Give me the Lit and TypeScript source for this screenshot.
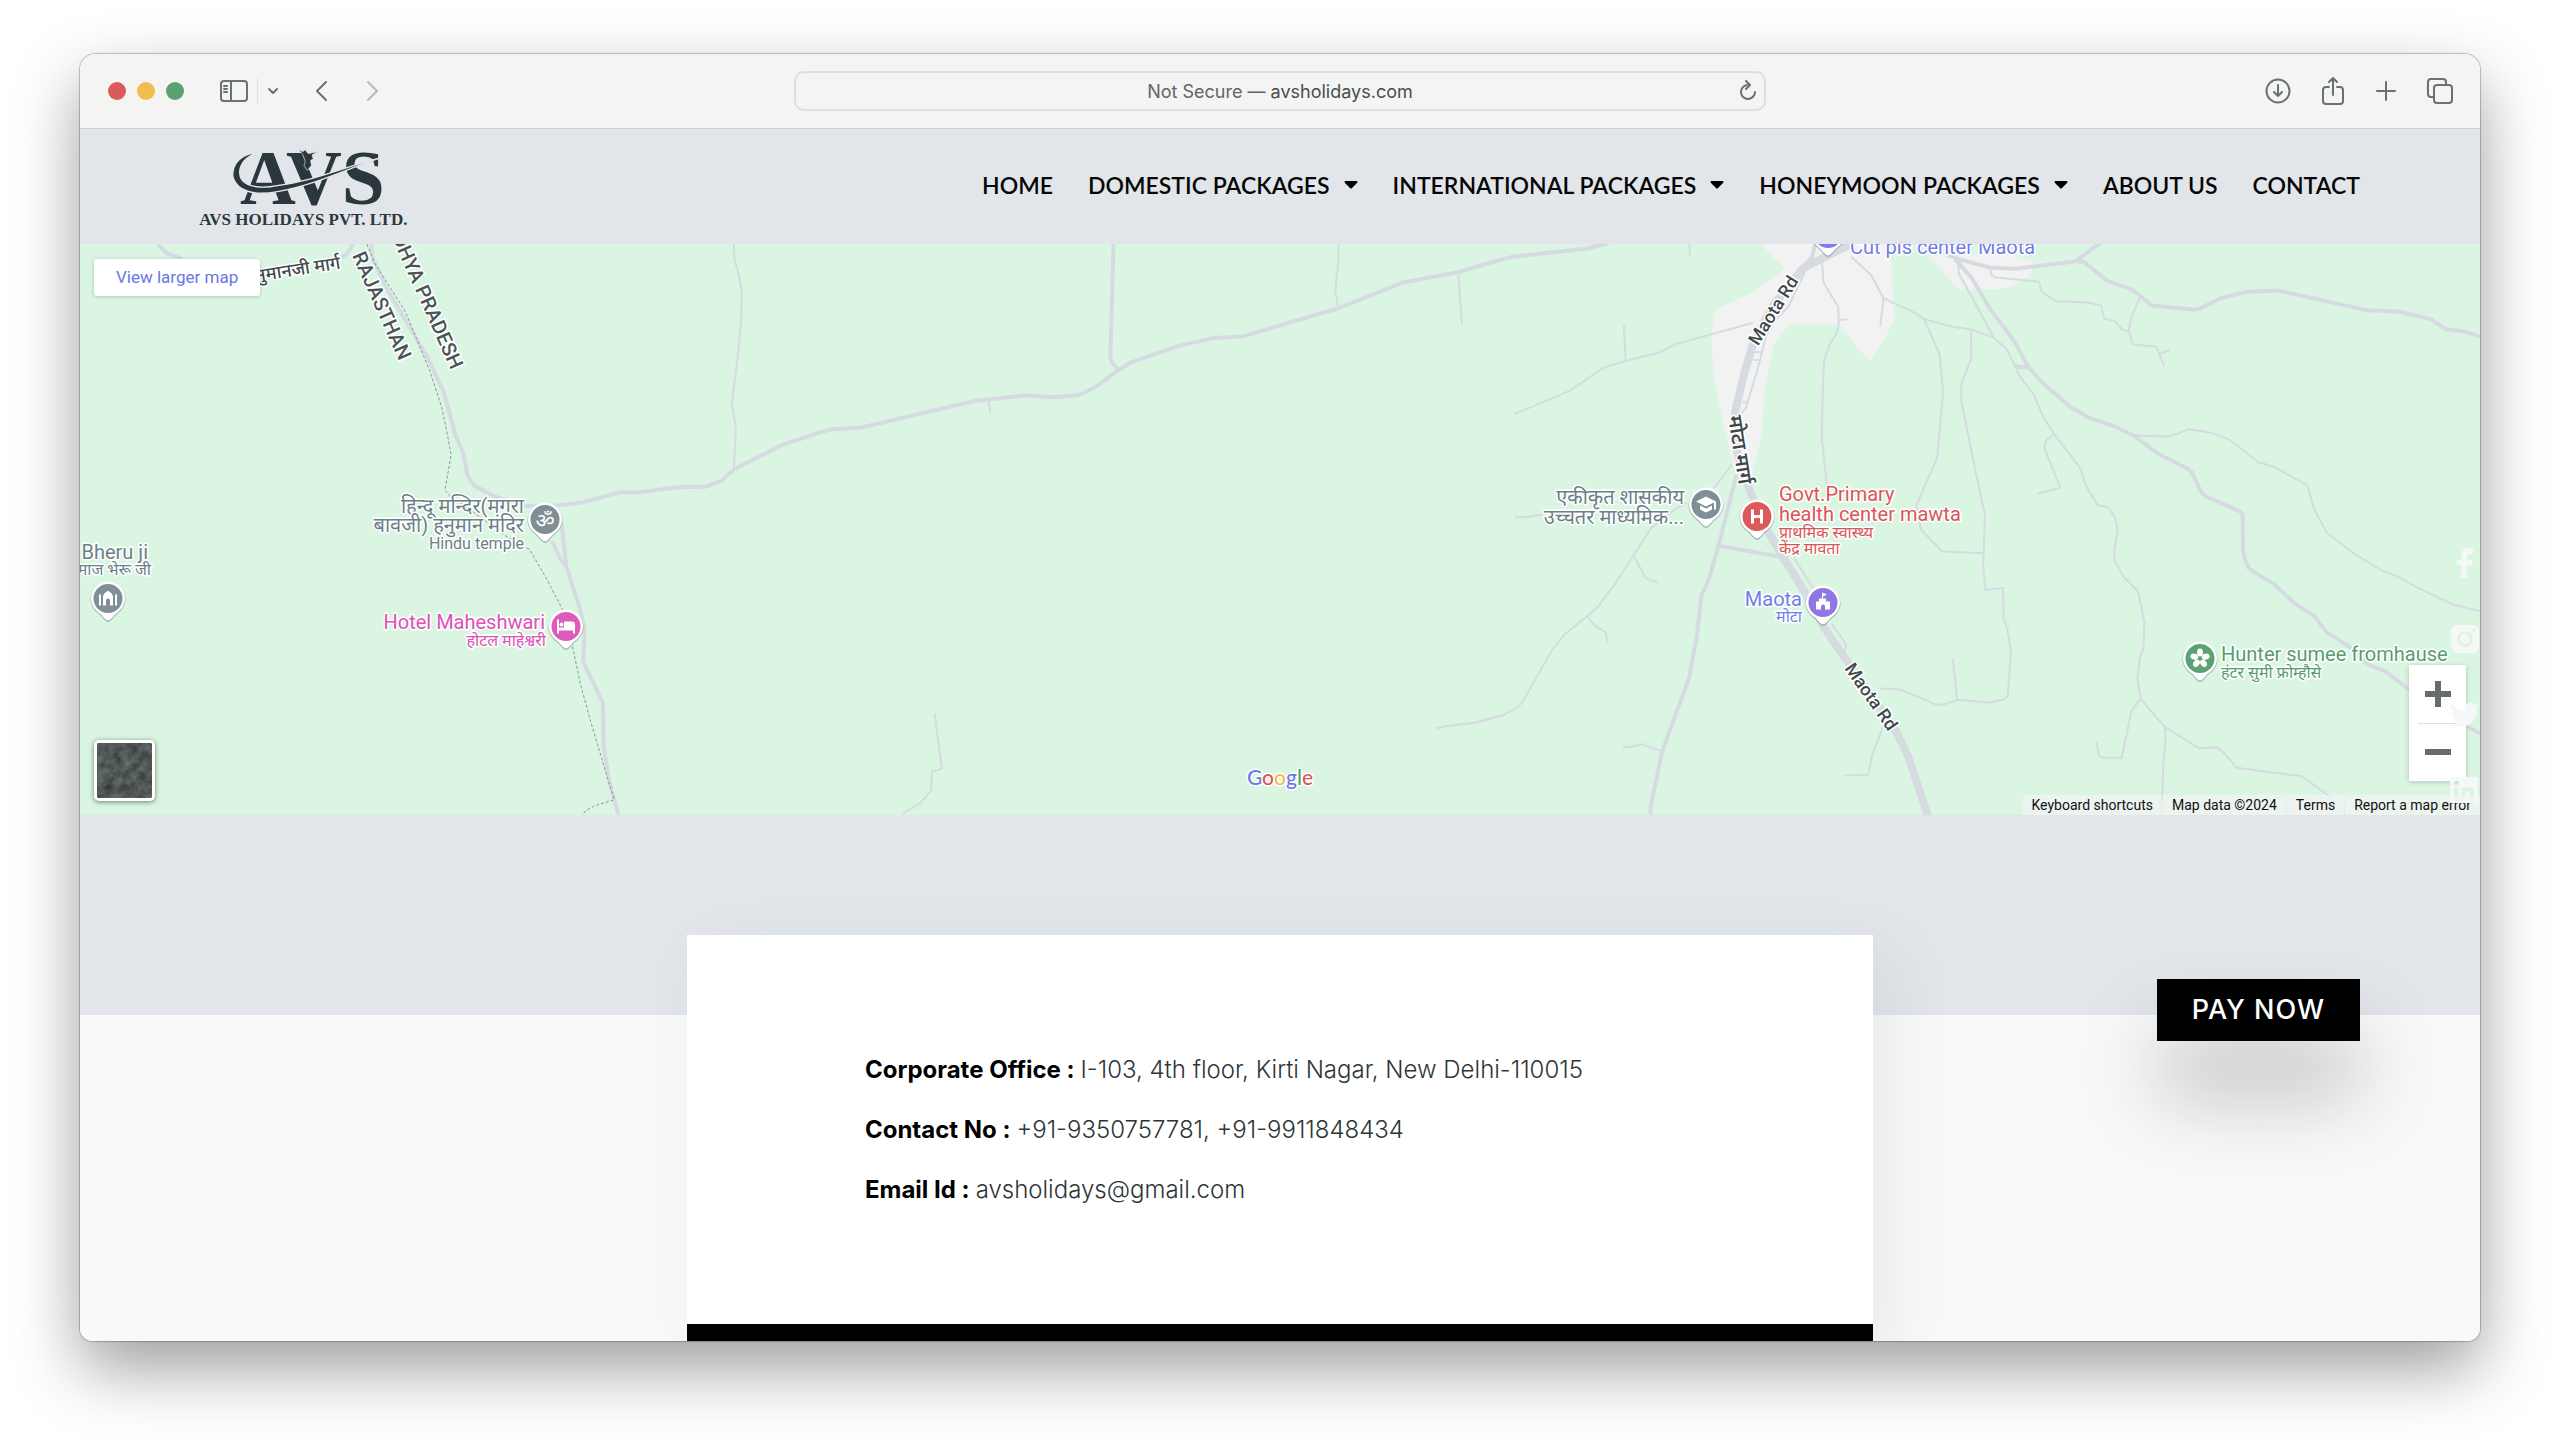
import { LitElement, html, svg, css } from "lit";
import { customElement } from "lit/decorators.js";

/* One tile of the map: its origin and scale on the canvas, and the lines drawn in its own units. */
interface Tile {
  at: string;
  land?: string[];
  trunk?: string[];
  major?: string[];
  minor?: string[];
  border?: string[];
}

const TILES: Tile[] = [
  {
    at: "translate(60 240) scale(0.4082 0.3699)",
    major: [
      "M240 10L262 35L300 50",
      "M718 10L704 36L690 46",
      "M762 10L767 50L800 130L900 315L940 410L970 530L988 575L998 635L1014 662L1065 692L1140 718L1225 716L1280 708L1375 680L1410 682L1510 668L1568 665",
      "M1205 812L1225 860L1240 880",
      "M1228 760L1240 880L1275 1000L1285 1050L1282 1140L1330 1250L1332 1370L1345 1460L1370 1560",
    ],
    border: [
      "M752 10L770 60L845 190L905 350L935 450L950 530L958 580L943 675L955 690L1020 740L1100 805L1150 835L1190 910L1232 1000L1258 1110L1275 1200L1300 1300L1335 1430L1358 1512L1310 1528L1290 1540L1275 1558",
    ],
  },
  {
    at: "translate(680 230) scale(0.523 0.3763)",
    major: [
      "M0 682L48 681L80 664L103 635L195 570L265 538L290 528L345 524L560 454L660 438L712 443L762 438L792 418L840 370L860 352L955 306L1020 286L1075 282L1260 206L1380 139L1488 111L1568 78",
      "M829 30L823 330L825 350L838 370",
    ],
    minor: [
      "M103 30L104 75L112 115L118 160L117 240L110 340L99 460L107 525L103 635",
      "M590 450L593 485",
      "M1259 30L1259 75L1253 160L1259 206",
      "M1488 111L1495 250",
      "M487 1283L494 1360L501 1430L482 1438L480 1490L460 1520L428 1548L426 1558",
      "M1447 1323L1470 1316L1520 1308L1568 1289",
    ],
  },
  {
    at: "translate(1480 230) scale(0.3571 0.3763)",
    land: [
      "M780 30L855 102L765 165L658 210L650 260L652 380L685 530L715 640L760 650L790 540L795 430L822 305L865 250L1005 250L1085 343L1098 343L1160 240L1148 30Z",
      "M1255 70L1345 158L1450 156L1490 148L1532 125L1548 104L1548 80L1480 62Z",
    ],
    trunk: [
      "M1035 37L905 100L875 135L820 200L765 300L740 380L715 480L720 590L755 690L800 790L850 870L915 970L960 1050L1010 1120L1165 1330L1200 1400L1230 1486L1256 1560",
    ],
    major: [
      "M940 30L930 70L895 110",
      "M0 93L90 70L300 48L360 34",
      "M718 650L670 830L640 930L620 970L607 1080L585 1190L510 1385L478 1530L477 1560",
      "M670 838L845 868",
    ],
    minor: [
      "M98 487L250 427L345 365L408 346L500 325L548 302L765 245",
      "M403 252L408 346",
      "M587 30L587 66",
      "M910 110L865 200L820 245L800 285L780 360L745 470L720 500",
      "M765 323H790",
      "M765 344H786",
      "M735 457H748",
      "M958 85L962 138L1003 203L1005 250L998 275L978 305L964 345L960 420L957 550L972 680",
      "M1007 238L1032 236",
      "M1040 70L1095 118L1130 180L1210 215L1243 235L1310 253L1344 259",
      "M1130 180L1121 255",
      "M1243 235L1287 330L1297 430L1280 605L1222 730L1235 795L1295 853L1410 858",
      "M1375 264L1376 340L1348 408L1348 455L1390 650L1414 755L1409 890L1415 955L1465 950L1466 1030L1476 1055L1487 1120L1478 1235L1468 1246L1425 1255L1338 1247L1298 1260L1272 1258L1178 1220L1120 1217",
      "M1324 1137L1336 1247",
      "M1128 1320L1098 1395L1088 1446L1020 1448",
      "M705 622L655 685",
      "M580 722L540 745L480 790L430 863L385 930L330 1000L300 1025L235 1075L200 1118L118 1255L100 1270L60 1290L0 1305",
      "M430 863L463 923L500 936",
      "M300 1025L320 1048L352 1068L357 1097",
      "M400 1370L418 1373L455 1365L505 1383",
      "M98 762L130 762L175 754",
      "M880 870L935 955",
      "M985 1045L1025 1100L1022 1117L1010 1115",
    ],
  },
  {
    at: "translate(1960 240) scale(0.3333)",
    major: [
      "M-40 42L0 57L90 81L165 85L350 62L373 65L443 122L512 145L540 165L575 195L700 207L720 205L785 172L860 154L955 150L1220 209L1315 213L1410 235L1460 267L1510 272L1564 290",
      "M350 60L420 8",
      "M-15 55L35 112L90 205L165 305L203 377L250 430L330 498L390 533L465 558L520 585L600 643L680 683L695 695L722 752L735 767L848 816",
      "M163 374L180 380L200 380",
    ],
    minor: [
      "M90 81L93 100L102 110L237 124L245 155L288 182L385 186L423 195L433 235L462 240L487 267L506 273L520 313L588 318L598 340L612 378",
      "M598 340L628 330",
      "M540 170L514 232L506 273",
      "M-6 62L-3 100L102 292",
      "M0 262L40 268L102 292L141 328L182 412L220 460L250 530L283 582L362 685L378 735L410 790L418 795L446 801L467 835L473 868L470 868",
      "M283 582L258 600L253 622L301 742L232 760",
      "M520 585L620 588L650 581L687 566L755 577L810 598L893 664L945 681L1042 735L1062 805L1100 876",
    ],
  },
  {
    at: "translate(1980 480) scale(0.3333)",
    major: [
      "M788 96L789 210L796 240L808 265L885 313L945 370L1005 408L1040 455L1110 500L1160 550L1215 572L1285 625L1460 738L1502 759",
    ],
    minor: [
      "M413 148L403 215L404 240L430 288L475 334L493 425L491 500L480 530L472 595L482 655L555 740L657 803L710 800L735 820L770 862L965 887L1045 945L1095 1004",
      "M482 655L455 690L425 832L365 832L355 820L350 785",
      "M555 740L557 775L550 850L548 920L540 1006",
      "M1040 156L1120 218L1205 270L1250 287L1315 323L1420 372L1502 393",
    ],
  },
];

interface Label {
  x: number;
  y: number;
  text: string;
  kind: string;
  turn?: number;
}

const LABELS: Label[] = [
  { x: 352, y: 255, text: "RAJASTHAN", kind: "region", turn: 66 },
  { x: 451, y: 370, text: "MADHYA PRADESH", kind: "region end", turn: 66 },
  { x: 341, y: 268, text: "हनुमानजी मार्ग", kind: "road end", turn: -9 },
  { x: 524, y: 512, text: "हिन्दू मन्दिर(मगरा", kind: "place grey end" },
  { x: 524, y: 531, text: "बावजी) हनुमान मंदिर", kind: "place grey end" },
  { x: 524, y: 548, text: "Hindu temple", kind: "sub grey end" },
  { x: 148, y: 558, text: "Bheru ji", kind: "place grey end" },
  { x: 151, y: 574, text: "समाज भेरू जी", kind: "sub grey end" },
  { x: 545, y: 628, text: "Hotel Maheshwari", kind: "place pink end" },
  { x: 546, y: 645, text: "होटल माहेश्वरी", kind: "sub pink end" },
  { x: 1850, y: 253, text: "Cut pls center Maota", kind: "place blue" },
  { x: 1758, y: 346, text: "Maota Rd", kind: "road", turn: -58 },
  { x: 1728, y: 416, text: "मोटा मार्ग", kind: "road large", turn: 81 },
  { x: 1844, y: 668, text: "Maota Rd", kind: "road", turn: 55 },
  { x: 1684, y: 503, text: "एकीकृत शासकीय", kind: "place grey end" },
  { x: 1684, y: 523, text: "उच्चतर माध्यमिक...", kind: "place grey end" },
  { x: 1779, y: 500, text: "Govt.Primary", kind: "place red" },
  { x: 1779, y: 520, text: "health center mawta", kind: "place red" },
  { x: 1779, y: 537, text: "प्राथमिक स्वास्थ्य", kind: "sub red" },
  { x: 1779, y: 553, text: "केंद्र मावता", kind: "sub red" },
  { x: 1802, y: 605, text: "Maota", kind: "place blue end" },
  { x: 1802, y: 621, text: "मोटा", kind: "sub blue end" },
  { x: 2221, y: 660, text: "Hunter sumee fromhause", kind: "place green" },
  { x: 2221, y: 677, text: "हंटर सुमी फ्रोम्हौसे", kind: "sub green" },
];

const GLYPHS = {
  temple: svg`<text class="om" x="0" y="8" text-anchor="middle">ॐ</text>`,
  shrine: svg`<path fill="#fff" d="M-9 7v-10l1-2 1 2v10zM7 7v-10l1-2 1 2v10zM-5 7v-9c1-4 3-4 5-6 2 2 4 2 5 6v9h-3v-5a2 2 0 0 0-4 0v5z"/>`,
  bed: svg`<path fill="#fff" d="M-9-7h2v8h5v-6h8a3 3 0 0 1 3 3v9h-2v-3h-14v3h-2z"/><circle cx="-4.500" cy="-2" r="2" fill="#fff"/>`,
  school: svg`<path fill="#fff" d="M-10-3l10-5 10 5v8h-2v-7l-8 4zM-6 1l6 3 6-3v4l-6 3-6-3z"/>`,
  hospital: svg`<path fill="none" stroke="#fff" stroke-width="3" d="M-4.500-7v14M4.500-7v14M-4.500 0h9"/>`,
  civic: svg`<path fill="#fff" d="M-1-10l5 2-4 2v2h3v3h4v8h-5v-3a2 2 0 0 0-4 0v3h-5v-8h3v-3h3z"/>`,
  flower: svg`${[0, 72, 144, 216, 288].map(
    (a) => svg`<ellipse cx="0" cy="-6" rx="3" ry="4" fill="#fff" transform="rotate(${a})"/>`
  )}`,
  none: svg``,
};

const PINS: { x: number; y: number; fill: string; glyph: keyof typeof GLYPHS }[] = [
  { x: 545, y: 519, fill: "#7f8f96", glyph: "temple" },
  { x: 108, y: 598, fill: "#7f8f96", glyph: "shrine" },
  { x: 566, y: 626, fill: "#de5bbb", glyph: "bed" },
  { x: 1828, y: 233, fill: "#7b7fea", glyph: "none" },
  { x: 1706, y: 504, fill: "#7f8f96", glyph: "school" },
  { x: 1757, y: 516, fill: "#dd5a5a", glyph: "hospital" },
  { x: 1823, y: 602, fill: "#8f78e4", glyph: "civic" },
  { x: 2200, y: 658, fill: "#5aa274", glyph: "flower" },
];

@customElement("area-map")
export class AreaMap extends LitElement {
  static styles = css`
    :host {
      display: block;
      position: relative;
      height: 572px;
      overflow: hidden;
      background: #daf6e3;
      font-family: Roboto, "Noto Sans Devanagari", "Noto Sans", sans-serif;
    }
    .canvas {
      display: block;
      width: 100%;
      height: 100%;
    }
    .land {
      fill: #f3f2f3;
    }
    .line {
      fill: none;
      stroke: #d5dbe1;
      stroke-linejoin: round;
      vector-effect: non-scaling-stroke;
    }
    .trunk {
      stroke-width: 8px;
    }
    .major {
      stroke-width: 4px;
    }
    .minor {
      stroke-width: 2px;
    }
    .border {
      stroke: #8d9499;
      stroke-width: 1px;
      stroke-dasharray: 3 2;
    }
    .label {
      paint-order: stroke;
      stroke: #fff;
      stroke-width: 3px;
      stroke-linejoin: round;
    }
    .place {
      font-size: 20px;
    }
    .sub {
      font-size: 16px;
    }
    .region {
      font-size: 20px;
      font-weight: 500;
      fill: #4b5356;
    }
    .road {
      font-size: 18px;
      font-weight: 500;
      fill: #3f484b;
    }
    .large {
      font-size: 20px;
      font-weight: 600;
    }
    .end {
      text-anchor: end;
    }
    .grey {
      fill: #6c7f88;
    }
    .pink {
      fill: #dd50b8;
    }
    .blue {
      fill: #727ce8;
    }
    .red {
      fill: #db5558;
    }
    .green {
      fill: #579c70;
    }
    .om {
      font-size: 21px;
      fill: #fff;
    }
    .wordmark {
      font: 500 21px Lato, sans-serif;
      text-anchor: middle;
    }
    .g-blue {
      fill: #6a78e8;
    }
    .g-red {
      fill: #dd5555;
    }
    .g-yellow {
      fill: #f1b94b;
    }
    .g-green {
      fill: #4fa06a;
    }
    .larger {
      position: absolute;
      left: 14px;
      top: 15px;
      padding: 0 22px;
      line-height: 37px;
      border-radius: 3px;
      background: #fff;
      box-shadow: 0 1px 4px rgba(0, 0, 0, 0.2);
      color: #6a76e8;
      font-size: 17px;
      text-decoration: none;
    }
    .satellite {
      position: absolute;
      left: 14px;
      bottom: 14px;
      width: 61px;
      height: 61px;
      padding: 0;
      border: 3px solid #fff;
      border-radius: 5px;
      overflow: hidden;
      background: #4c5452;
      box-shadow: 0 1px 5px rgba(0, 0, 0, 0.5);
    }
    .satellite svg {
      display: block;
    }
    .zoom {
      position: absolute;
      right: 14px;
      bottom: 34px;
      display: flex;
      flex-direction: column;
      background: #fff;
      box-shadow: 0 1px 5px rgba(0, 0, 0, 0.2);
    }
    .zoom button {
      display: grid;
      place-items: center;
      width: 57px;
      height: 58px;
      padding: 0;
      border: 0;
      background: none;
    }
    .zoom hr {
      width: 40px;
      height: 1px;
      margin: 0 auto -1px;
      border: 0;
      background: #dfe2e2;
    }
    .credits {
      position: absolute;
      right: 0;
      bottom: 0;
      display: flex;
      gap: 1px;
      font-size: 14px;
      line-height: 20px;
      color: #111;
    }
    .credits > * {
      margin: 0;
      padding: 0 9px;
      border: 0;
      background: rgba(243, 243, 243, 0.7);
      font: inherit;
      color: inherit;
      text-decoration: none;
    }
  `;

  private lines(kind: string, paths: string[] = []) {
    return paths.map((d) => svg`<path class="line ${kind}" d=${d}/>`);
  }

  render() {
    return html`
      <svg class="canvas" viewBox="80 243 2400 572" preserveAspectRatio="xMidYMid slice" role="img" aria-label="Map">
        ${TILES.map((t) => svg`<g transform=${t.at}>${(t.land ?? []).map((d) => svg`<path class="land" d=${d}/>`)}</g>`)}
        ${TILES.map(
          (t) => svg`<g transform=${t.at}>
            ${this.lines("minor", t.minor)}${this.lines("major", t.major)}
            ${this.lines("trunk", t.trunk)}${this.lines("border", t.border)}
          </g>`
        )}
        ${LABELS.map(
          (l) => svg`<text class="label ${l.kind}" transform="translate(${l.x} ${l.y}) rotate(${l.turn ?? 0})">${l.text}</text>`
        )}
        ${PINS.map(
          (p) => svg`<g transform="translate(${p.x} ${p.y})">
            <path d="M0 23.500C-2 23.500-4 21-7 17.500-12 13-17.500 9-17.500 1A17.500 17.500 0 0 1 17.500 1C17.500 9 12 13 7 17.500 4 21 2 23.500 0 23.500z" fill="#7d8a86" opacity="0.6"/>
            <path d="M0 22C-2 22-4 19.500-7 16-12 12-17 8-17 0A17 17 0 0 1 17 0C17 8 12 12 7 16 4 19.500 2 22 0 22z" fill="#fff"/>
            <circle r="14.500" fill=${p.fill}/>${GLYPHS[p.glyph]}
          </g>`
        )}
        <text class="label wordmark" x="1280" y="784"><tspan class="g-blue">G</tspan><tspan class="g-red">o</tspan><tspan class="g-yellow">o</tspan><tspan class="g-blue">g</tspan><tspan class="g-green">l</tspan><tspan class="g-red">e</tspan></text>
      </svg>
      <a class="larger" href="#map">View larger map</a>
      <button class="satellite" aria-label="Show satellite imagery">
        <svg width="55" height="55" viewBox="0 0 55 55">
          <filter id="grain" color-interpolation-filters="sRGB"><feTurbulence type="fractalNoise" baseFrequency="0.12" numOctaves="4"/><feColorMatrix values="0.3 0 0 0 0.16 0.3 0 0 0 0.19 0.3 0 0 0 0.18 0 0 0 0 1"/></filter>
          <rect width="55" height="55" filter="url(#grain)"/>
        </svg>
      </button>
      <div class="zoom">
        <button aria-label="Zoom in"><svg width="26" height="26"><path d="M13 0v26M0 13h26" stroke="#666c6b" stroke-width="6"/></svg></button>
        <hr />
        <button aria-label="Zoom out"><svg width="26" height="26"><path d="M0 13h26" stroke="#666c6b" stroke-width="6"/></svg></button>
      </div>
      <div class="credits">
        <button>Keyboard shortcuts</button><span>Map data ©2024</span><a href="#terms">Terms</a><a href="#report">Report a map error</a>
      </div>
    `;
  }
}

const NAV: { text: string; menu: boolean }[] = [
  { text: "HOME", menu: false },
  { text: "DOMESTIC PACKAGES", menu: true },
  { text: "INTERNATIONAL PACKAGES", menu: true },
  { text: "HONEYMOON PACKAGES", menu: true },
  { text: "ABOUT US", menu: false },
  { text: "CONTACT", menu: false },
];

const CONTACTS = [
  ["Corporate Office :", "I-103, 4th floor, Kirti Nagar, New Delhi-110015"],
  ["Contact No :", "+91-9350757781, +91-9911848434"],
  ["Email Id :", "avsholidays@gmail.com"],
];

@customElement("app-root")
export class AppRoot extends LitElement {
  static styles = css`
    :host {
      display: flex;
      box-sizing: border-box;
      height: 100vh;
      padding: 54px 80px 106px;
      background: #fff;
      font-family: Inter, sans-serif;
    }
    .window {
      position: relative;
      display: flex;
      flex-direction: column;
      flex: 1;
      min-width: 0;
      border-radius: 16px 16px 13px 13px;
      overflow: hidden;
      background: #f9f9f9;
    }
    .frame {
      display: flex;
      flex: 1;
      min-width: 0;
      border-radius: 16px 16px 13px 13px;
      box-shadow: 0 0 1px 1px rgba(0, 0, 0, 0.24), 0 28px 66px rgba(0, 0, 0, 0.38);
    }
    .toolbar {
      flex: none;
      display: grid;
      grid-template-columns: 1fr minmax(0, 972px) 1fr;
      align-items: center;
      height: 74px;
      border-bottom: 1px solid #cdd0d1;
      background: #f4f4f2;
    }
    .left,
    .right,
    .lights {
      display: flex;
      align-items: center;
    }
    .left {
      padding-left: 28px;
    }
    .lights {
      gap: 11px;
      margin-right: 36px;
    }
    .light {
      width: 18px;
      height: 18px;
      border-radius: 50%;
    }
    .close {
      background: #dc5a5b;
    }
    .minimise {
      background: #f0bd51;
    }
    .expand {
      background: #5aa071;
    }
    .tool {
      display: flex;
      padding: 0;
      border: 0;
      background: none;
      color: #697172;
    }
    .tool svg {
      fill: none;
      stroke: currentColor;
      stroke-width: 2px;
      stroke-linecap: round;
      stroke-linejoin: round;
    }
    .split {
      width: 1px;
      height: 26px;
      margin: 0 9px;
      background: #dfe1e1;
    }
    .back {
      margin: 0 38px 0 36px;
    }
    .forward {
      color: #b4bcbe;
    }
    .right {
      justify-content: flex-end;
      gap: 30px;
      padding-right: 26px;
    }
    .address {
      display: grid;
      grid-template-columns: 26px 1fr 26px;
      align-items: center;
      height: 40px;
      box-sizing: border-box;
      border: 2px solid #dddfe1;
      border-radius: 10px;
      font-size: 18px;
      color: #5f6769;
      text-align: center;
    }
    .address span {
      grid-column: 2;
    }
    .host {
      color: #464e50;
    }
    .header {
      flex: none;
      display: flex;
      align-items: center;
      justify-content: space-between;
      height: 115px;
      padding: 0 120px 0 110px;
      background: #e2e6eb;
    }
    .logo {
      display: flex;
    }
    .logo svg {
      fill: #2b383b;
    }
    .initials {
      font: bold 232px "Liberation Serif", serif;
    }
    .company {
      font: bold 51px "Liberation Serif", serif;
      text-anchor: middle;
    }
    .nav {
      display: flex;
      gap: 35px;
      padding-bottom: 4px;
    }
    .nav a {
      display: flex;
      align-items: center;
      gap: 14px;
      color: #060606;
      font: 600 23px Lato, sans-serif;
      text-decoration: none;
      white-space: nowrap;
    }
    .main {
      position: relative;
      flex: 1;
      display: flex;
      flex-direction: column;
      align-items: center;
      background: linear-gradient(#e2e6eb 200px, #f9f9f9 200px);
    }
    .card {
      width: 49.42%;
      margin-top: 120px;
      background: #fff;
      border-bottom: 17px solid #000;
      box-shadow: 20px 20px 60px rgba(30, 60, 70, 0.08);
    }
    .details {
      margin: 0;
      padding: 105px 178px 104px;
    }
    .row {
      display: flex;
      gap: 6px;
      font: 300 24px/60px Inter, sans-serif;
      color: #2d3537;
      white-space: nowrap;
    }
    .row dt {
      font-weight: 700;
      color: #000;
    }
    .row dd {
      margin: 0;
    }
    .pay {
      position: absolute;
      right: 120px;
      top: 164px;
      padding: 0 35px;
      line-height: 62px;
      background: #000;
      color: #fff;
      box-shadow: 0 56px 80px rgba(20, 30, 35, 0.25);
      font-size: 27px;
      font-weight: 500;
      letter-spacing: 1px;
      text-decoration: none;
    }
    .social {
      position: absolute;
      right: 0;
      top: 494px;
      display: flex;
      flex-direction: column;
      gap: 46px;
    }
    .social a {
      display: flex;
    }
    .social svg {
      fill: #f6f8f8;
    }
  `;

  render() {
    return html`
      <div class="frame">
        <div class="window">
          <div class="toolbar">
            <div class="left">
              <div class="lights">
                <i class="light close"></i><i class="light minimise"></i><i class="light expand"></i>
              </div>
              <button class="tool" aria-label="Sidebar">
                <svg width="28" height="24"><rect x="1" y="2" width="26" height="20" rx="3" /><path d="M11 2v20M4 7h3M4 10h3M4 13h3" /></svg>
              </button>
              <i class="split"></i>
              <button class="tool" aria-label="Sidebar options">
                <svg width="12" height="8"><path d="M2 2l4 4 4-4" /></svg>
              </button>
              <button class="tool back" aria-label="Back">
                <svg width="13" height="22"><path d="M11 2L2 11l9 9" /></svg>
              </button>
              <button class="tool forward" aria-label="Forward">
                <svg width="13" height="22"><path d="M2 2l9 9-9 9" /></svg>
              </button>
            </div>
            <div class="address">
              <span>Not Secure — <span class="host">avsholidays.com</span></span>
              <button class="tool" aria-label="Reload">
                <svg width="20" height="22"><path d="M9 5a7 7 0 1 0 8 7M8 1l4 4-4 4" /></svg>
              </button>
            </div>
            <div class="right">
              <button class="tool" aria-label="Downloads">
                <svg width="26" height="26"><circle cx="13" cy="13" r="11.500" /><path d="M13 7v11M9 14l4 4 4-4" /></svg>
              </button>
              <button class="tool" aria-label="Share">
                <svg width="24" height="30"><path d="M8 11H5a3 3 0 0 0-3 3v11a3 3 0 0 0 3 3h14a3 3 0 0 0 3-3V14a3 3 0 0 0-3-3h-3M12 19V2M8 6l4-4 4 4" /></svg>
              </button>
              <button class="tool" aria-label="New tab">
                <svg width="22" height="22"><path d="M11 2v18M2 11h18" /></svg>
              </button>
              <button class="tool" aria-label="Tab overview">
                <svg width="27" height="26"><rect x="7" y="7" width="18" height="18" rx="3" /><path d="M7 19H4a3 3 0 0 1-3-3V4a3 3 0 0 1 3-3h12a3 3 0 0 1 3 3v3" /></svg>
              </button>
            </div>
          </div>
          <div class="header">
            <a class="logo" href="#home" aria-label="AVS Holidays">
              <svg width="230" height="92" viewBox="0 0 690 276">
                <text class="initials" x="150" y="189">AVS</text>
                <path d="M190 36C142 44 122 82 130 112 142 148 188 166 262 152 376 132 462 86 574 50 460 78 380 118 262 134 200 146 162 132 152 110 142 82 158 54 190 40z" stroke="#e2e6eb" stroke-width="4" />
                <path d="M324 24l14 8 8-6 8 12 28-6-16 10 4 12-8 4 2 16-12 14-10-14 4-12-8-22z" stroke="#e2e6eb" stroke-width="2" />
                <text class="company" x="340" y="252">AVS HOLIDAYS PVT. LTD.</text>
              </svg>
            </a>
            <nav class="nav">
              ${NAV.map(
                (n) => html`<a href="#">${n.text}${n.menu
                  ? html`<svg width="14" height="8"><path d="M1 0h12q1 1 0 2L8 7q-1 1-2 0L1 2q-1-1 0-2z" /></svg>`
                  : null}</a>`
              )}
            </nav>
          </div>
          <area-map></area-map>
          <div class="main">
            <section class="card">
              <dl class="details">
                ${CONTACTS.map(([k, v]) => html`<div class="row"><dt>${k}</dt><dd>${v}</dd></div>`)}
              </dl>
            </section>
            <a class="pay" href="#pay">PAY NOW</a>
          </div>
          <div class="social">
            <a href="#facebook" aria-label="Facebook"><svg width="30" height="30" viewBox="0 0 30 30"><path d="M23 1v5h-3q-3 0-3 3v3h6l-1 5h-5v13h-6V17H7v-5h4V8q0-7 7-8 3 0 5 1z" /></svg></a>
            <a href="#instagram" aria-label="Instagram"><svg width="30" height="30" viewBox="0 0 30 30"><path fill-rule="evenodd" d="M8 1h14a7 7 0 0 1 7 7v14a7 7 0 0 1-7 7H8a7 7 0 0 1-7-7V8a7 7 0 0 1 7-7zM15 7a8 8 0 1 0 0 16 8 8 0 0 0 0-16zM15 10a5 5 0 1 1 0 10 5 5 0 0 1 0-10zM24 4a2 2 0 1 0 0 4 2 2 0 0 0 0-4z" /></svg></a>
            <a href="#twitter" aria-label="Twitter"><svg width="30" height="30" viewBox="0 0 512 512"><path d="M459 152c0 4 1 9 1 14 0 138-106 299-299 299-59 0-115-17-161-47 8 1 16 1 25 1 49 0 94-16 130-45-46-1-85-31-98-73 6 1 13 2 20 2 9 0 19-1 28-4-48-10-84-52-84-103v-1c14 8 30 13 47 13-28-19-47-51-47-87 0-19 5-37 14-53 52 64 129 106 216 110-2-8-3-16-3-24 0-58 47-105 105-105 30 0 58 13 77 33 24-5 46-13 66-25-8 24-24 45-46 58 21-2 42-8 60-16-14 21-31 39-51 53z" /></svg></a>
            <a href="#linkedin" aria-label="LinkedIn"><svg width="28" height="28" viewBox="0 0 448 448"><path fill-rule="evenodd" d="M416 16H32C14 16 0 31 0 48v384h448V48c0-17-14-32-32-32zM135 400H69V186h66zM102 157a38 38 0 1 1 0-77 38 38 0 0 1 0 77zM384 400h-66V296c0-25 0-57-35-57s-40 27-40 55v106h-66V186h64v29c9-17 31-35 63-35 67 0 80 45 80 102z" /></svg></a>
          </div>
        </div>
      </div>
    `;
  }
}
